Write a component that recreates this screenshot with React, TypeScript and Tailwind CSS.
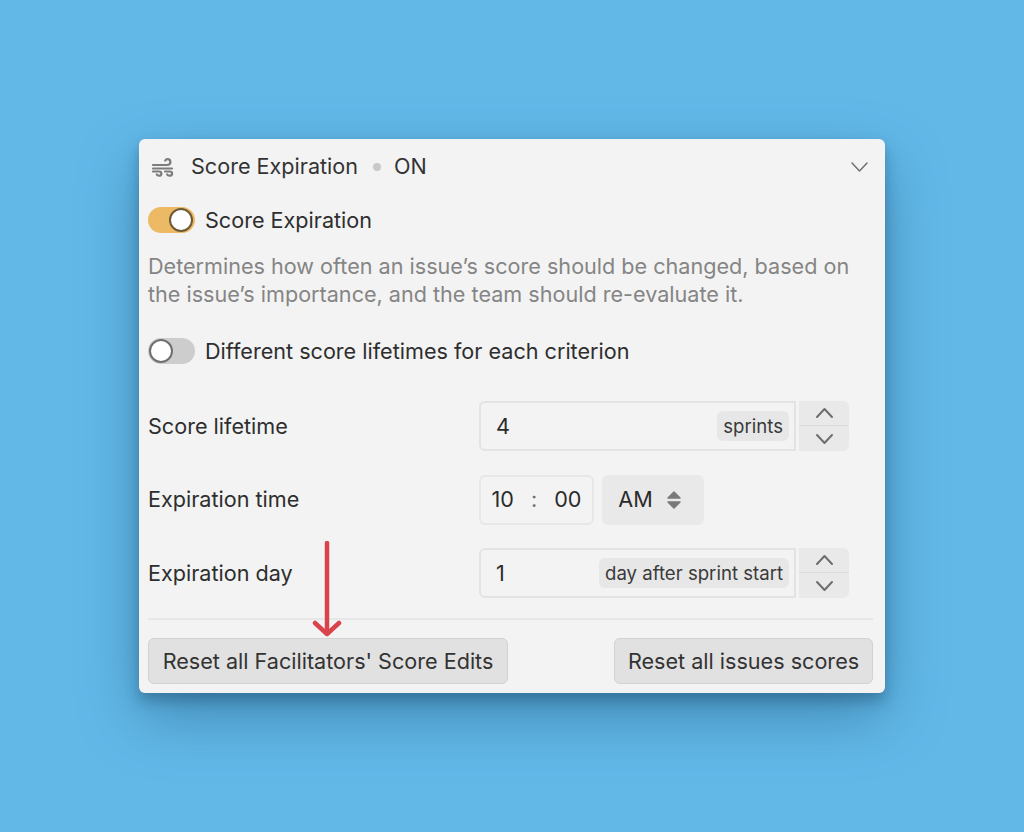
const Toggle = ({ on }: { on: boolean }) => (
  <div
    className={`flex h-[26px] w-[47px] items-center rounded-full ${
      on ? "justify-end bg-[#ecb964] pr-[2px]" : "justify-start bg-[#cdcdcd] pl-[1px]"
    }`}
  >
    <div
      className={`h-[24px] w-[24px] rounded-full border-[2px] bg-white ${
        on ? "border-[#6e5a35]" : "border-[#6f6f6f]"
      }`}
    />
  </div>
);

const Chevron = ({ up, color = "#6d6d6d", weight = 2 }: { up?: boolean; color?: string; weight?: number }) => (
  <svg width="19" height="12" viewBox="0 0 19 12" fill="none" stroke={color} strokeWidth={weight} strokeLinecap="round" strokeLinejoin="round">
    <path d={up ? "M2 10l7.5-8 7.5 8" : "M2 2l7.5 8 7.5-8"} />
  </svg>
);

const Stepper = () => (
  <div className="ml-[3px] flex h-[50px] w-[50px] flex-col items-center rounded-r-[6px] bg-[#e9e9e9]">
    <div className="flex h-[25px] w-full items-center justify-center border-b border-[#dcdcdc]">
      <Chevron up />
    </div>
    <div className="flex h-[25px] w-full items-center justify-center">
      <Chevron />
    </div>
  </div>
);

const NumberField = ({ value, unit }: { value: string; unit: string }) => (
  <div className="flex items-center">
    <div className="flex h-[50px] w-[317px] items-center justify-between rounded-l-[6px] border-2 border-[#e3e3e3] pl-[15px] pr-[5px]">
      <span className="text-[21.6px] text-[#2b2b2b]">{value}</span>
      <span className="rounded-[6px] bg-[#e7e7e7] px-[6px] py-[3px] text-[18.6px] leading-[24px] text-[#3a3a3a]">{unit}</span>
    </div>
    <Stepper />
  </div>
);

const Row = ({ label, children }: { label: string; children: React.ReactNode }) => (
  <div className="flex h-[50px] items-center">
    <span className="w-[331px] text-[21.6px] text-[#2e2e2e]">{label}</span>
    {children}
  </div>
);

const App = () => {
  return (
    <div className="flex h-[832px] w-full items-start justify-center bg-[#62b9e8] pt-[139px] font-['Inter',sans-serif]">
      <div className="relative h-[554px] w-[746px] rounded-[6px] bg-[#f3f3f3] pl-[9px] pr-[12px] shadow-[0_8px_14px_rgba(20,60,90,0.35),0_24px_60px_rgba(20,70,110,0.4)]">
        <div className="flex h-[55px] items-center">
          <svg width="24" height="20" viewBox="0 0 24 20" fill="none" stroke="#7c7c7c" strokeWidth="2.2" strokeLinecap="round" className="ml-[3px]">
            <path d="M2 8h14c2.4 0 3.4-1.6 3.4-3 0-1.6-1.2-2.8-2.8-2.8-1.1 0-2 .5-2.4 1.4" />
            <path d="M2 11.5h19" />
            <path d="M2 14.5h6c1.5 0 2.4 1 2.4 1.9 0 1.3-1 2.3-2.4 2.3-1 0-1.8-.5-2.2-1.2" />
            <path d="M14 14.5h4.500c1.500 0 2.600 1 2.600 1.900 0 1.300-1.100 2.300-2.600 2.300-1.100 0-2-.5-2.400-1.200" />
          </svg>
          <span className="ml-[16px] text-[21.6px] text-[#333333]">Score Expiration</span>
          <span className="ml-[15px] h-[8px] w-[8px] rounded-full bg-[#c9c9c9]" />
          <span className="ml-[13px] text-[21.6px] text-[#333333]">ON</span>
          <div className="ml-auto mr-[4px]">
            <Chevron color="#707070" weight={1.5} />
          </div>
        </div>
        <div className="mt-[13px] flex items-center gap-[10px]">
          <Toggle on />
          <span className="text-[21.6px] leading-[26px] text-[#2e2e2e]">Score Expiration</span>
        </div>
        <p className="mt-[19px] text-[21.6px] leading-[28px] text-[#858585]">
          Determines how often an issue’s score should be changed, based on
          <br />
          the issue’s importance, and the team should re-evaluate it.
        </p>
        <div className="mt-[30px] flex items-center gap-[10px]">
          <Toggle on={false} />
          <span className="text-[21.6px] leading-[26px] text-[#2e2e2e]">Different score lifetimes for each criterion</span>
        </div>
        <div className="mt-[37px] flex flex-col gap-[23.5px]">
          <Row label="Score lifetime">
            <NumberField value="4" unit="sprints" />
          </Row>
          <Row label="Expiration time">
            <div className="flex h-[50px] w-[115px] items-center justify-center gap-[17px] rounded-[6px] border-2 border-[#e7e7e7] text-[21.6px] text-[#2b2b2b]">
              <span>10</span>
              <span className="text-[#6d6d6d]">:</span>
              <span>00</span>
            </div>
            <div className="ml-[8px] flex h-[50px] w-[102px] items-center justify-center gap-[13px] rounded-[6px] bg-[#e9e9e9] pr-[6px] text-[21.6px] text-[#2b2b2b]">
              <span>AM</span>
              <svg width="16" height="20" viewBox="0 0 16 20" fill="#7a7a7a" stroke="#7a7a7a" strokeWidth="1.5" strokeLinejoin="round">
                <path d="M8 2l6 6H2z" />
                <path d="M8 18l6-6H2z" />
              </svg>
            </div>
          </Row>
          <Row label="Expiration day">
            <NumberField value="1" unit="day after sprint start" />
          </Row>
        </div>
        <div className="mt-[20px] h-[2px] bg-[#e7e7e7]" />
        <div className="mt-[18px] flex justify-between">
          <button className="h-[46px] w-[360px] rounded-[6px] border border-[#d2d2d2] bg-[#e1e1e1] text-[21.6px] text-[#333333]">
            Reset all Facilitators' Score Edits
          </button>
          <button className="h-[46px] w-[259px] rounded-[6px] border border-[#d2d2d2] bg-[#e1e1e1] text-[21.6px] text-[#333333]">
            Reset all issues scores
          </button>
        </div>
        <svg width="30" height="96" viewBox="0 0 30 96" fill="none" stroke="#d9444c" strokeWidth="4.5" strokeLinecap="round" strokeLinejoin="round" className="absolute left-[173px] top-[402px]">
          <path d="M15 2v90" />
          <path d="M3 82l12 11 12-11" />
        </svg>
      </div>
    </div>
  );
};

export default App;
